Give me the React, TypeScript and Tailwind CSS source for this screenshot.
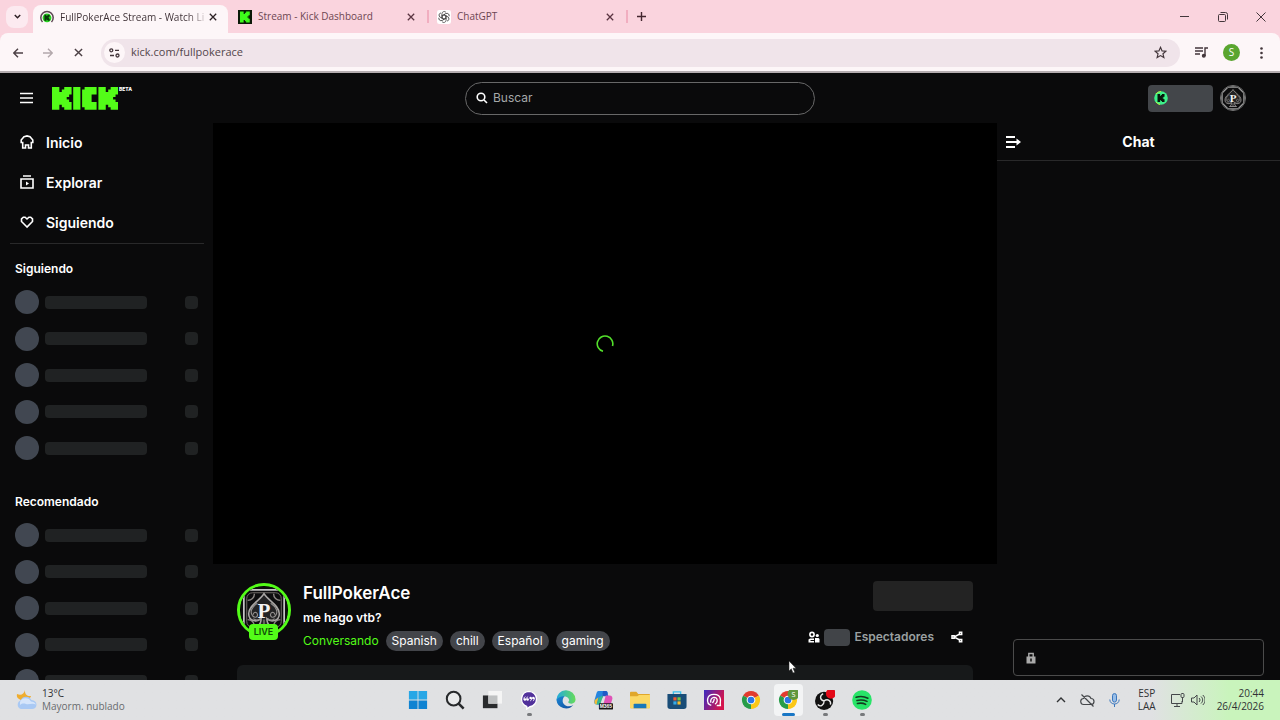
import type { ReactNode } from 'react';

const K_MARK = 'M0 0h3v2h1V1h1V0h3v3H7v1H6v1h1v1h1v3H5V8H4V7H3v2H0Z';

type TabProps = {
  title: string;
  icon: ReactNode;
};

type TaskbarIconProps = {
  label: string;
  children: ReactNode;
  active?: boolean;
  running?: boolean;
};

function CrossIcon({ size = 8 }: { size?: number }) {
  return (
    <svg width={size} height={size} viewBox="0 0 10 10" fill="none" aria-hidden="true">
      <path d="m1 1 8 8M9 1 1 9" stroke="currentColor" strokeWidth="1.6" />
    </svg>
  );
}

function KickFavicon() {
  return (
    <svg width="14" height="14" viewBox="0 0 14 14" aria-hidden="true">
      <path d="M0 0h14v14H0Z" fill="#0b1a08" />
      <path d={K_MARK} transform="translate(2 1.5) scale(1.22)" fill="#3dfb1b" />
    </svg>
  );
}

function LiveFavicon() {
  return (
    <svg width="14" height="14" viewBox="0 0 14 14" fill="none" aria-hidden="true">
      <path d="M2.5 12A6.2 6.2 0 1 1 11.5 12" stroke="#5b4550" strokeWidth="1.5" />
      <circle cx="7" cy="7.8" r="4.4" fill="#27d321" />
      <path d={K_MARK} transform="translate(4.4 4.8) scale(.66)" fill="#0b3a0a" />
    </svg>
  );
}

function ChatGptIcon() {
  return (
    <svg width="14" height="14" viewBox="0 0 24 24" aria-hidden="true">
      <rect width="24" height="24" rx="4" fill="#fff" />
      <g fill="none" stroke="#444" strokeWidth="1.4">
        {[0, 60, 120, 180, 240, 300].map((angle) => (
          <path key={angle} d="M12 8.2 8.5 10.2V6.2a3.9 3.9 0 0 1 6.8-2.3M12 8.2l5 2.9" transform={`rotate(${angle} 12 12)`} />
        ))}
      </g>
    </svg>
  );
}

function KickLogo() {
  return (
    <svg width="66" height="23" viewBox="0 0 66 23" fill="#53fc18" aria-hidden="true">
      <path d={K_MARK} transform="scale(2.45 2.52)" />
      <path d="M21.2 0h7.2v22.7h-7.2Z" />
      <path d="M32.6 0h12v7.6h-5v7.5h5v7.6h-12v-2.5h-2.5V2.5h2.5Z" />
      <path d={K_MARK} transform="translate(46.4) scale(2.45 2.52)" />
    </svg>
  );
}

function SpadeAvatar({ size, square }: { size: number; square?: boolean }) {
  return (
    <svg width={size} height={size} viewBox="0 0 48 48" fill="none" aria-hidden="true">
      <rect width="48" height="48" fill="#0d0d0e" />
      {square ? (
        <>
          <rect x="3" y="3" width="42" height="42" rx="4" stroke="#c4c4c4" strokeWidth="1.8" />
          <rect x="6" y="6" width="36" height="36" rx="6" stroke="#77716e" />
          <path d="M7 14c4 0 7-3 7-7M41 14c-4 0-7-3-7-7M7 34c4 0 7 3 7 7M41 34c-4 0-7 3-7 7" stroke="#8d8885" strokeWidth="1.4" />
        </>
      ) : (
        <path d="M14 2h20l12 12v20L34 46H14L2 34V14Z" stroke="#9b9b9b" strokeWidth="3" />
      )}
      <path d="M24 7c4 7 16 12 16 21 0 8-9 9-13 5 0 4 1 6 4 8H17c3-2 4-4 4-8-4 4-13 3-13-5C8 19 20 14 24 7Z" fill="#232324" stroke="#a9a6a4" strokeWidth="1.6" />
      <path d="M17 17c-6 4-8 9-5 13 3 3 6 1 5-2s-5-1-4 1M31 17c6 4 8 9 5 13-3 3-6 1-5-2s5-1 4 1M20 33c-2 2-5 2-7 0M28 33c2 2 5 2 7 0M24 34v6" stroke="#918e8c" strokeWidth="1.2" />
      <text x="24" y="32" textAnchor="middle" fill="#f4f4f4" fontFamily="Liberation Serif, serif" fontSize="22" fontWeight="700">P</text>
    </svg>
  );
}

function BrowserTab({ title, icon }: TabProps) {
  return (
    <div className="flex w-[199px] items-center border-r-2 border-[#f1aec0] pr-3 pl-2">
      {icon}
      <span className="ml-[6px] flex-1 text-[10px] whitespace-nowrap text-[#6d4652]">{title}</span>
      <button type="button" aria-label={`Cerrar ${title}`} className="text-[#5a3441]">
        <CrossIcon />
      </button>
    </div>
  );
}

function BrowserChrome() {
  return (
    <header className="shrink-0 bg-[#fad4de] font-['Open_Sans','Noto_Sans',sans-serif]">
      <div className="flex h-[33px] items-center">
        <button type="button" aria-label="Buscar pestañas" className="ml-[6px] grid h-[22px] w-[22px] place-items-center rounded-lg bg-[#fceaf0] text-[#2c2024]">
          <svg width="7" height="5" viewBox="0 0 9 6" fill="none"><path d="m1 1 3.5 3.5L8 1" stroke="currentColor" strokeWidth="1.9" /></svg>
        </button>
        <div className="mt-[5px] ml-[5px] flex h-7 w-[195px] items-center rounded-t-lg bg-[#fdf6f8] pr-[11px] pb-1 pl-[7px]">
          <LiveFavicon />
          <span className="ml-[6px] flex-1 bg-linear-to-r from-[#3c2f34] from-85% to-[#fdf6f8] bg-clip-text text-[10px] whitespace-nowrap text-transparent">
            FullPokerAce Stream - Watch Li
          </span>
          <button type="button" aria-label="Cerrar pestaña" className="text-[#2c2024]"><CrossIcon /></button>
        </div>
        <div className="ml-[2px] flex h-[13px] translate-y-0">
          <BrowserTab title="Stream - Kick Dashboard" icon={<KickFavicon />} />
          <BrowserTab title="ChatGPT" icon={<ChatGptIcon />} />
        </div>
        <button type="button" aria-label="Nueva pestaña" className="ml-[9px] text-[#43262f]">
          <svg width="9" height="9" viewBox="0 0 9 9" fill="none"><path d="M4.5 0v9M0 4.5h9" stroke="currentColor" strokeWidth="1.4" /></svg>
        </button>
        <div className="mr-[14px] ml-auto flex items-center gap-7 text-[#43363b]">
          <button type="button" aria-label="Minimizar">
            <svg width="10" height="10" viewBox="0 0 10 10"><path d="M0 4.5h9" stroke="currentColor" /></svg>
          </button>
          <button type="button" aria-label="Restaurar">
            <svg width="10" height="10" viewBox="0 0 10 10" fill="none"><rect x=".5" y="2.5" width="7" height="7" rx="1" stroke="currentColor" /><path d="M2.5.5h5a2 2 0 0 1 2 2v5" stroke="currentColor" /></svg>
          </button>
          <button type="button" aria-label="Cerrar ventana">
            <svg width="10" height="10" viewBox="0 0 10 10"><path d="m.5.5 9 9M9.500.5l-9 9" stroke="currentColor" /></svg>
          </button>
        </div>
      </div>
      <div className="flex h-10 items-center rounded-t-lg border-b-2 border-[#b5adb0] bg-[#fdf6f8] pt-px pr-[17px] pl-[13px]">
        <div className="flex w-[88px] items-center gap-5 text-[#4c4045]">
          <button type="button" aria-label="Atrás">
            <svg width="10" height="10" viewBox="0 0 10 10" fill="none"><path d="M10 5H1M5 .8.8 5 5 9.200" stroke="currentColor" strokeWidth="1.4" /></svg>
          </button>
          <button type="button" aria-label="Adelante" className="text-[#b3a8ac]">
            <svg width="10" height="10" viewBox="0 0 10 10" fill="none"><path d="M0 5h9M5 .8 9.200 5 5 9.200" stroke="currentColor" strokeWidth="1.4" /></svg>
          </button>
          <button type="button" aria-label="Detener" className="ml-px"><CrossIcon size={9} /></button>
        </div>
        <div className="flex h-7 flex-1 items-center rounded-full bg-[#f0e4ea] pr-[13px] pl-[3px]">
          <button type="button" aria-label="Información del sitio" className="grid h-[21px] w-[21px] place-items-center rounded-full bg-[#fdf6f8]">
            <svg width="11" height="10" viewBox="0 0 11 10" fill="none" stroke="#43363b" strokeWidth="1.3">
              <circle cx="2.300" cy="2.300" r="1.500" /><path d="M6 2.300h4M1 7.500h4" /><circle cx="8.500" cy="7.500" r="1.500" />
            </svg>
          </button>
          <input aria-label="Dirección" defaultValue="kick.com/fullpokerace" className="ml-[6px] min-w-0 flex-1 bg-transparent text-[11px] text-[#54464c] outline-none" />
          <button type="button" aria-label="Marcar página">
            <svg width="13" height="13" viewBox="0 0 24 24" fill="none"><path d="m12 2.500 2.900 6.600 7.100.6-5.400 4.700 1.600 7-6.200-3.700-6.200 3.700 1.600-7L2 9.700l7.100-.6Z" stroke="#43363b" strokeWidth="2.200" /></svg>
          </button>
        </div>
        <button type="button" aria-label="Control multimedia" className="ml-[15px]">
          <svg width="13" height="11" viewBox="0 0 13 11" fill="none" stroke="#43363b" strokeWidth="1.400">
            <path d="M0 1h8M0 4h8M0 7h5M10 9V1h3" /><circle cx="8.800" cy="8.800" r="1.300" fill="#43363b" />
          </svg>
        </button>
        <button type="button" aria-label="Perfil" className="ml-[15px] grid h-[17px] w-[17px] place-items-center rounded-full bg-[#5aa52f] text-[10px] text-white">S</button>
        <button type="button" aria-label="Menú" className="ml-5">
          <svg width="3" height="12" viewBox="0 0 3 12" fill="#43363b"><circle cx="1.500" cy="1.500" r="1.300" /><circle cx="1.500" cy="6" r="1.300" /><circle cx="1.500" cy="10.500" r="1.300" /></svg>
        </button>
      </div>
    </header>
  );
}

function SiteHeader() {
  return (
    <div className="grid h-[50px] shrink-0 grid-cols-[1fr_350px_1fr] items-center px-5">
      <div className="flex items-center">
        <button type="button" aria-label="Menú lateral">
          <svg width="13" height="12" viewBox="0 0 13 12" fill="none"><path d="M0 1.500h13M0 6h13M0 10.500h13" stroke="#fff" strokeWidth="1.600" /></svg>
        </button>
        <a href="#" aria-label="Kick" className="ml-[19px] flex items-start">
          <KickLogo />
          <span className="ml-px text-[5px] leading-[5px] font-extrabold text-white">BETA</span>
        </a>
      </div>
      <label className="flex h-[33px] items-center rounded-full border border-[#686868] px-[10px]">
        <svg width="12" height="12" viewBox="0 0 12 12" fill="none"><circle cx="5" cy="5" r="3.800" stroke="#fff" strokeWidth="1.600" /><path d="m8 8 3 3" stroke="#fff" strokeWidth="1.600" /></svg>
        <input type="text" placeholder="Buscar" aria-label="Buscar" className="ml-[5px] min-w-0 flex-1 bg-transparent text-[12px] text-white outline-none placeholder:text-[#a5a8a9]" />
      </label>
      <div className="flex items-center justify-end gap-[7px] pr-[14px]">
        <button type="button" aria-label="Saldo" className="flex h-[27px] w-[65px] items-center rounded bg-[#43464a] pl-[6px]">
          <svg width="14" height="14" viewBox="0 0 14 14"><circle cx="7" cy="7" r="6.800" fill="#3df08a" /><path d="M2 3a6.400 6.400 0 0 1 5-2.500M2 11a6.500 6.500 0 0 0 4 2.500" stroke="#b6f83c" fill="none" /><path d={K_MARK} transform="translate(3.500 3)scale(.88)" fill="#07170c" /></svg>
        </button>
        <button type="button" aria-label="Cuenta" className="overflow-hidden rounded-full border border-[#777]">
          <SpadeAvatar size={24} />
        </button>
      </div>
    </div>
  );
}

function NavItem({ label, children }: { label: string; children: ReactNode }) {
  return (
    <a href="#" className="flex h-10 items-center gap-3 pb-[2px] pl-5 text-[14px] font-semibold text-white">
      <svg width="14" height="14" viewBox="0 0 14 14" fill="none" stroke="#fff" strokeWidth="1.600">{children}</svg>
      {label}
    </a>
  );
}

function ChannelSkeletons({ title }: { title: string }) {
  return (
    <section className="px-[15px]">
      <h2 className="h-[31px] text-[12px] leading-5 font-semibold text-white">{title}</h2>
      <div className="flex h-[170px] flex-col justify-between">
        {[0, 1, 2, 3, 4].map((row) => (
          <div key={row} className="flex h-6 items-center">
            <div className="h-6 w-6 rounded-full bg-[#414751]" />
            <div className="ml-[6px] h-[13px] w-[102px] rounded bg-[#202223]" />
            <div className="ml-auto h-[13px] w-[13px] rounded bg-[#202223]" />
          </div>
        ))}
      </div>
    </section>
  );
}

function Sidebar() {
  return (
    <aside className="w-[213px] shrink-0 overflow-hidden">
      <nav>
        <NavItem label="Inicio"><path d="M4 1.800 7 .9l3 .9 2.800 3.200v2.500h-1.500v5.500H8.500V10h-3v3H2.700V7.500H1.200V5Z" /></NavItem>
        <NavItem label="Explorar"><path d="M3 1h8M1 4h12v9H1Z" /><path d="m6 6.500 3 2-3 2Z" fill="#fff" stroke="none" /></NavItem>
        <NavItem label="Siguiendo"><path d="M7 12 1.500 6.500V3.800l1.800-1.600h1.800L7 4l1.900-1.800h1.800l1.800 1.600v2.700Z" /></NavItem>
      </nav>
      <hr className="mr-[9px] mb-[15px] ml-[10px] border-[#29292a]" />
      <div className="space-y-8">
        <ChannelSkeletons title="Siguiendo" />
        <ChannelSkeletons title="Recomendado" />
      </div>
    </aside>
  );
}

function Stream() {
  return (
    <main className="flex min-w-0 flex-1 flex-col overflow-hidden">
      <div className="grid aspect-video shrink-0 place-items-center bg-black">
        <svg width="18" height="18" viewBox="0 0 18 18" fill="none" aria-label="Cargando"><path d="M7 16.300A7.800 7.800 0 1 1 16.500 11" stroke="#53e02b" strokeWidth="1.600" /></svg>
      </div>
      <div className="flex justify-between px-6 pt-[17px]">
        <div className="flex gap-3">
          <div className="relative mt-[2px] h-[54px] w-[54px]">
            <div className="grid h-[54px] w-[54px] place-items-center overflow-hidden rounded-full border-[3px] border-[#53fc18] bg-black">
              <SpadeAvatar size={46} square />
            </div>
            <span className="absolute top-[41px] left-[12px] h-4 w-[29px] rounded-sm bg-[#53fc18] text-center text-[9px] leading-4 font-semibold text-[#0f4a08]">LIVE</span>
          </div>
          <div className="text-white">
            <h1 className="text-[17px] leading-6 font-semibold">FullPokerAce</h1>
            <p className="mt-[3px] text-[12px] leading-5 font-semibold">me hago vtb?</p>
            <div className="mt-[3px] flex items-center gap-[7px] text-[12px] leading-5">
              <a href="#" className="text-[#53fc18]">Conversando</a>
              {['Spanish', 'chill', 'Español', 'gaming'].map((tag) => (
                <a key={tag} href="#" className="rounded-full bg-[#43454a] px-[6px]">{tag}</a>
              ))}
            </div>
          </div>
        </div>
        <div className="flex flex-col items-end">
          <div className="h-[30px] w-[100px] rounded bg-[#232323]" />
          <div className="mt-[17px] flex h-[18px] items-center pr-[10px] text-[12px] font-semibold text-[#9aa0a1]">
            <svg width="12" height="12" viewBox="0 0 12 12" fill="#fff">
              <circle cx="4" cy="3.500" r="2.100" fill="none" stroke="#fff" strokeWidth="1.600" /><circle cx="9.300" cy="4.500" r="1.600" /><path d="M.5 11.500v-3l1.500-1h4v1.500H2.500v1H6v1.500ZM7 7h3.500l1 1v3.500H7Z" />
            </svg>
            <span className="mr-1 ml-1 h-[17px] w-[26px] rounded bg-[#414448]" />
            Espectadores
            <button type="button" aria-label="Compartir" className="ml-[17px]">
              <svg width="12" height="12" viewBox="0 0 12 12" fill="none" stroke="#fff" strokeWidth="1.500"><path d="M3 6 9 2.800M3 6l6 3.200" /><path d="M1 4.800h2.200v2.400H1ZM8.500 1.200h2.200v2.200H8.500ZM8.500 8.500h2.200v2.200H8.500Z" /></svg>
            </button>
          </div>
        </div>
      </div>
      <div className="mx-6 mt-[14px] h-20 shrink-0 rounded-md bg-[#17191a]" />
    </main>
  );
}

function ChatPanel() {
  return (
    <aside className="flex w-[283px] shrink-0 flex-col">
      <div className="grid h-[38px] shrink-0 grid-cols-[1fr_auto_1fr] items-center border-b border-[#29292a] px-[9px]">
        <button type="button" aria-label="Ocultar chat" className="justify-self-start">
          <svg width="15" height="12" viewBox="0 0 15 12" fill="none" stroke="#fff" strokeWidth="1.800"><path d="M0 1h9M0 6h13M0 11h9" /><path d="m10.500 2.500 4.500 3.500-4.500 3.500Z" fill="#fff" stroke="none" /></svg>
        </button>
        <h2 className="text-[14px] font-bold text-white">Chat</h2>
      </div>
      <label className="mx-4 mt-auto mb-1 flex h-[37px] items-center rounded border border-[#4b4b4b] px-3">
        <svg width="10" height="12" viewBox="0 0 10 12"><path d="M2.800 5V1.500h4.400V5" fill="none" stroke="#aaa" strokeWidth="1.400" /><path d="M.5 4.500h9v7h-9Z" fill="#aaa" /><path d="M4 6.500h2v3H4Z" fill="#333" /></svg>
        <input type="text" disabled aria-label="Enviar un mensaje" className="min-w-0 flex-1 bg-transparent" />
      </label>
    </aside>
  );
}

function TaskbarIcon({ label, children, active, running }: TaskbarIconProps) {
  return (
    <button
      type="button"
      aria-label={label}
      className={`relative grid h-8 w-[29px] place-items-center rounded ${active ? 'bg-[#f3f4f5]' : ''}`}
    >
      <svg width="20" height="20" viewBox="0 0 22 22" fill="none">{children}</svg>
      {active && <span className="absolute bottom-0 left-2 h-[3px] w-[13px] rounded-full bg-[#1976c5]" />}
      {running && <span className="absolute bottom-0 left-3 h-[3px] w-[5px] rounded-full bg-[#77797c]" />}
    </button>
  );
}

function ChromeArt() {
  return (
    <>
      <path d="M11 11 2.340 6a10 10 0 0 1 17.320 0Z" fill="#e23b2e" />
      <path d="M11 11V21A10 10 0 0 1 2.340 6Z" fill="#279c49" />
      <path d="M11 11 19.660 6A10 10 0 0 1 11 21Z" fill="#fbc717" />
      <circle cx="11" cy="11" r="4.800" fill="#fff" />
      <circle cx="11" cy="11" r="3.700" fill="#2b76e5" />
    </>
  );
}

function Taskbar() {
  return (
    <footer className="grid h-10 shrink-0 grid-cols-[1fr_auto_1fr] items-center bg-linear-to-r from-[#e0e1e3] from-90% to-[#c9f4bc] to-96% font-['Open_Sans','Noto_Sans',sans-serif] text-[10px] leading-[13px] text-[#303234]">
      <button type="button" className="flex items-center gap-[5px] pl-4 text-left">
        <svg width="21" height="22" viewBox="0 0 21 22">
          <path d="M9 1c-.5 4 2 6.500 6 6-1 4-7 6-12 3C1 9 .5 7 1 5c4 2 7 0 8-4Z" fill="#efad2f" />
          <path d="M5 20a4.500 4.500 0 0 1-.5-8.500A6 6 0 0 1 15.500 11c3 .2 5 2 5 4.500 0 3-2 4.500-4.500 4.500Z" fill="#a9c9f4" />
          <path d="M4 13a6 6 0 0 1 11-.5c2 0 4 1 5 3-4-2-7 .5-10-.5-2-.6-4-.8-6 1Z" fill="#d5e5fb" />
        </svg>
        <span><span className="block">13°C</span><span className="block text-[#696c6e]">Mayorm. nublado</span></span>
      </button>
      <div className="flex gap-[8px]">
        <TaskbarIcon label="Inicio">
          <path d="M1 1h9.500v9.500H1ZM11.500 1H21v9.500h-9.500Z" fill="#27a7e6" /><path d="M1 11.500h9.500V21H1ZM11.500 11.500H21V21h-9.500Z" fill="#0f83d2" />
        </TaskbarIcon>
        <TaskbarIcon label="Buscar">
          <circle cx="9.500" cy="9.500" r="7.500" fill="#e9eaeb" stroke="#27292b" strokeWidth="2.200" /><path d="m14.500 14.500 6 6" stroke="#27292b" strokeWidth="2.800" />
        </TaskbarIcon>
        <TaskbarIcon label="Vista de tareas">
          <path d="M1 6h16v14H1Z" fill="#292b2d" /><path d="M7 1h15v14H7Z" fill="#f5f5f5" /><path d="M7 6h10v9H7Z" fill="#bfc1c2" />
        </TaskbarIcon>
        <TaskbarIcon label="Mensajes" running>
          <path d="M11 1.500a8.500 8.500 0 0 1 1 16.900L8.500 21v-3A8.500 8.500 0 0 1 11 1.500Z" fill="#51319b" stroke="#fff" strokeWidth="1.500" />
          <g fill="#fff"><circle cx="6.500" cy="10.500" r="1.400" /><circle cx="9.500" cy="10.500" r="1.400" /><circle cx="12.800" cy="8.800" r="1.400" /><circle cx="15.800" cy="8.800" r="1.400" /></g>
          <path d="M5.400 10.500c0-2 .5-2.800 1.600-3.200M8.400 10.500c0-2 .5-2.800 1.600-3.200M13.900 8.800c0 2-.5 2.800-1.600 3.200M16.900 8.800c0 2-.5 2.800-1.600 3.200" stroke="#fff" />
        </TaskbarIcon>
        <TaskbarIcon label="Edge">
          <defs>
            <linearGradient id="edgeTop"><stop stopColor="#23a9df" /><stop offset="1" stopColor="#66dc58" /></linearGradient>
            <linearGradient id="edgeBase" x2="1" y2="1"><stop stopColor="#1c8ad8" /><stop offset="1" stopColor="#104b9a" /></linearGradient>
          </defs>
          <path d="M.5 11c1-6 6-6 9-4-3 3-3 8 1 10 3 1.500 6 1 8.500-.5A10.500 10.500 0 0 1 .5 11Z" fill="url(#edgeBase)" />
          <path d="M.5 11A10.500 10.500 0 0 1 21.500 10.500c0 3-2 4.500-4.500 4.500-2 0-3.500-.8-3.500-1.500s1-1.200 1-2.500C14 6 4 5 .5 11Z" fill="url(#edgeTop)" />
        </TaskbarIcon>
        <TaskbarIcon label="Copilot">
          <path d="M6 1h8c2 0 2 1 2.500 3H11L7 16H4c-3 0-3-3-2-6l2-7c.3-1 1-2 2-2Z" fill="#2585df" />
          <path d="M6 8 4 16c-2 0-3-2-2-5Z" fill="#efbd36" /><path d="M11 1h3c2 0 2 3 3 6h-6l-2 5Z" fill="#205ac6" />
          <path d="M14 6h4c3 0 4 2 3 5l-2 6h-8Z" fill="#df53b8" /><path d="m7 8 4-2-3 10H4Z" fill="#33bb8b" />
          <rect x="6.500" y="14.500" width="15.500" height="7" rx="1" fill="#161616" />
          <text x="14.200" y="20" textAnchor="middle" fontFamily="Liberation Sans, sans-serif" fontSize="5.500" fontWeight="700" fill="#fff">M365</text>
        </TaskbarIcon>
        <TaskbarIcon label="Explorador de archivos">
          <path d="M0 3a1 1 0 0 1 1-1h6l2 2.500h12a1 1 0 0 1 1 1V19a1 1 0 0 1-1 1H1a1 1 0 0 1-1-1Z" fill="#e0a72b" /><path d="M0 7h8l2-1.500h12V19a1 1 0 0 1-1 1H1a1 1 0 0 1-1-1Z" fill="#fbd864" /><path d="M4 20v-4a1 1 0 0 1 1-1h12a1 1 0 0 1 1 1v4Z" fill="#1878ba" />
        </TaskbarIcon>
        <TaskbarIcon label="Microsoft Store">
          <path d="M7 5V2h8v3" stroke="#39c0ee" strokeWidth="1.500" /><path d="M.5 4.500h21V18a3 3 0 0 1-3 3h-15a3 3 0 0 1-3-3Z" fill="#194d78" />
          <path d="M7 8h3.500v3.500H7Z" fill="#f15c32" /><path d="M11.500 8H15v3.500h-3.500Z" fill="#76c943" /><path d="M7 12.500h3.500V16H7Z" fill="#36aae5" /><path d="M11.500 12.500H15V16h-3.500Z" fill="#f9bd2c" />
        </TaskbarIcon>
        <TaskbarIcon label="Huella">
          <defs><linearGradient id="pokerTile" y2=".4"><stop stopColor="#3b2ac0" /><stop offset="1" stopColor="#d4154d" /></linearGradient></defs>
          <path d="M0 0h22v22H0Z" fill="url(#pokerTile)" /><path d="M8 17c-3-1-4.500-4-4-7 1-7 13-7 14 0 .4 2-.5 4 0 7h-4M7.500 14c-1.500-7 7.500-8 7-2-.2 2-1 3-2.500 3.500M11 9.500c1 2-1 3-1.500 5" stroke="#fff" strokeWidth="1.500" />
        </TaskbarIcon>
        <TaskbarIcon label="Chrome"><ChromeArt /></TaskbarIcon>
        <TaskbarIcon label="Chrome, perfil S" active>
          <ChromeArt /><circle cx="17" cy="4.500" r="6.500" fill="#5f963c" /><text x="17" y="7.500" textAnchor="middle" fontSize="8" fill="#fff">S</text>
        </TaskbarIcon>
        <TaskbarIcon label="OBS Studio" running>
          <circle cx="10" cy="12" r="10" fill="#111" />
          <path d="M10 12c-5-1-5-6-1-8M10 12c4-3 8 0 7 4M10 12c0 5-4 7-7 4" stroke="#e8e8e8" strokeWidth="1.500" />
          <circle cx="17.500" cy="4" r="5.500" fill="#e30918" />
        </TaskbarIcon>
        <TaskbarIcon label="Spotify" running>
          <circle cx="11" cy="11" r="10.800" fill="#28e468" /><path d="M4.500 8c4.500-1.500 9-1 13 1M5.500 11.500c4-1 7.500-.7 11 1M6 14.800c3.500-.8 6.500-.5 9 1" stroke="#143a20" strokeWidth="1.800" strokeLinecap="round" />
        </TaskbarIcon>
      </div>
      <div className="flex items-center justify-end pr-4">
        <button type="button" aria-label="Iconos ocultos"><svg width="10" height="6" viewBox="0 0 10 6" fill="none"><path d="m1 5 4-4 4 4" stroke="#303234" strokeWidth="1.400" /></svg></button>
        <button type="button" aria-label="OneDrive" className="ml-[14px]"><svg width="15" height="13" viewBox="0 0 15 13" fill="none" stroke="#44474a" strokeWidth="1.200"><path d="M4 10.500a3 3 0 0 1-.5-6 4 4 0 0 1 7.500 0 3 3 0 0 1 0 6ZM1.500.5l12 12" /></svg></button>
        <button type="button" aria-label="Micrófono" className="ml-[14px]"><svg width="11" height="14" viewBox="0 0 11 14" fill="none"><rect x="3.500" y=".6" width="4" height="8.500" rx="2" fill="#98bde7" stroke="#3976bd" /><path d="M.8 6.500c0 6 9.400 6 9.400 0M5.500 11v3" stroke="#3976bd" /></svg></button>
        <button type="button" className="ml-[18px] text-center">ESP<br />LAA</button>
        <button type="button" aria-label="Red y volumen" className="ml-[15px] flex gap-[6px]">
          <svg width="14" height="14" viewBox="0 0 14 14" fill="none" stroke="#44474a"><path d="M9 1.500H.5v9h10.500V8M3 13.500h6M6 11v2" /><rect x="10" y=".5" width="3" height="4" rx="1" /><path d="M11.500 5v4" /></svg>
          <svg width="14" height="14" viewBox="0 0 14 14" fill="none" stroke="#44474a"><path d="M.5 5h2.500l3-3v10L3 9H.5ZM8 5c1.300 1.300 1.300 2.700 0 4M10 3.500c2.200 2 2.200 5 0 7M11.800 2c3 3 3 7 0 10" /></svg>
        </button>
        <button type="button" className="ml-3 text-right">20:44<br />26/4/2026</button>
      </div>
    </footer>
  );
}

export default function App() {
  return (
    <div className="relative flex h-screen flex-col overflow-hidden bg-[#0a0a0b] font-['Inter',sans-serif]">
      <BrowserChrome />
      <SiteHeader />
      <div className="flex min-h-0 flex-1">
        <Sidebar />
        <Stream />
        <ChatPanel />
      </div>
      <Taskbar />
      <svg className="pointer-events-none absolute top-[660px] left-[788px]" width="9" height="14" viewBox="0 0 9 14" aria-hidden="true">
        <path d="M1 1v10l2.300-2.200L5 13l1.800-.8L5 8.200h3Z" fill="#fff" stroke="#222" strokeWidth=".5" />
      </svg>
    </div>
  );
}
